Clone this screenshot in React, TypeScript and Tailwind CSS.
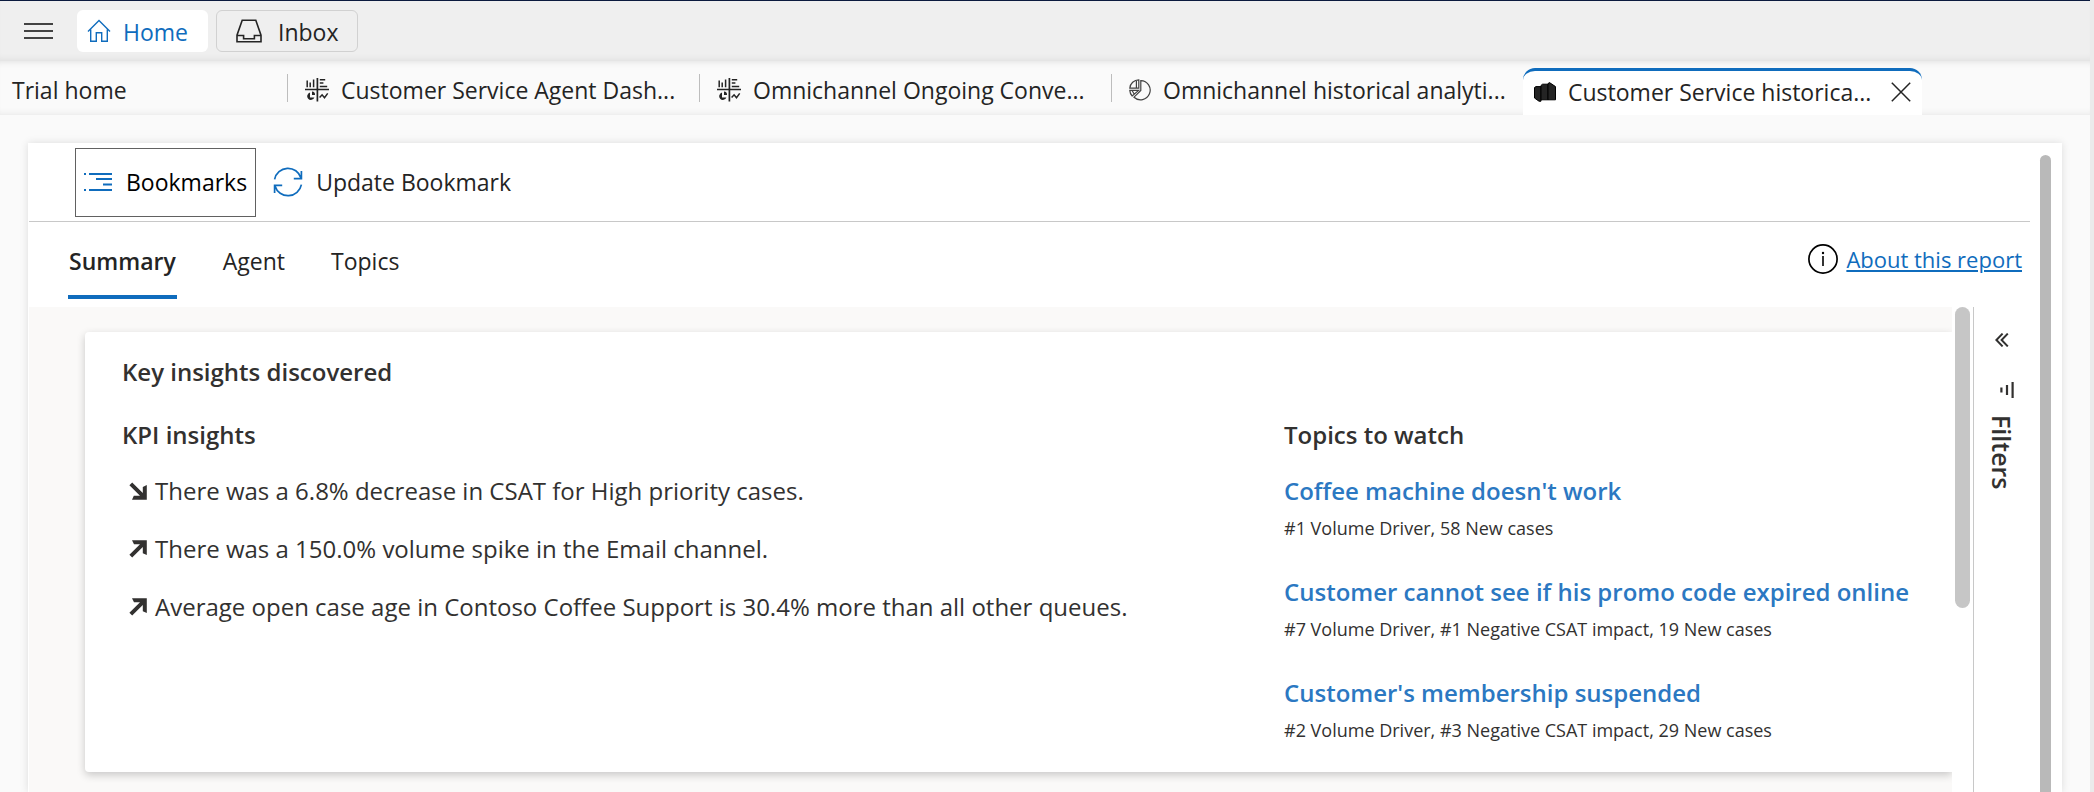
import type { ReactNode } from "react";

type IconProps = { className?: string };

const HomeIcon = () => (
  <svg className="h-6 w-6 shrink-0" viewBox="0 0 24 24" fill="none" stroke="#0f6cbd" strokeWidth="1.4" aria-hidden="true">
    <path d="M1 12.5 12 1.5l11 11M3.7 10.5V22.3h5.6v-8.6h5.4v8.6h5.6V10.5" />
  </svg>
);

const InboxIcon = () => (
  <svg className="h-6 w-[26px] shrink-0" viewBox="0 0 26 24" fill="none" stroke="#242424" strokeWidth="1.6" aria-hidden="true">
    <path d="M6.2 1.2h13.6l5.2 15v6.6H1v-6.6zM1 16.5h6.6v3.2h10.8v-3.2H25" />
  </svg>
);

const DashboardIcon = () => (
  <svg className="h-6 w-6 shrink-0" viewBox="0 0 24 24" fill="none" stroke="#242424" strokeWidth="1.5" aria-hidden="true">
    <path d="M0 11.5h24M12.4 0v23.4" strokeWidth="1.7" />
    <path d="M2.2 2.5v6.8M5.2 4.6v4.7M8.6 1.4v7.9" />
    <path d="M14.8 1.8h5.4M14.8 5h3.6M14.8 8.6h7.4" />
    <path d="M5 14.6a3.7 3.7 0 1 0 4.4 4.8H5z" fill="#242424" stroke="none" />
    <path d="M7 13.6a3.2 3.2 0 0 1 3 3.4H7z" fill="#242424" stroke="none" />
    <path d="m14.6 19.6 2.5-2.8 2.4 3 3.2-4.4" />
  </svg>
);

const PieIcon = () => (
  <svg className="h-[22px] w-[22px] shrink-0" viewBox="0 0 22 22" fill="none" stroke="#424242" strokeWidth="1.2" aria-hidden="true">
    <path d="M11.8 1.6A9.6 9.6 0 1 1 5 18.2l6.8-6.8z" />
    <path d="M9.8.8v8.4H.8A9 9 0 0 1 9.8.8zM7.4 1.6v7.2" />
    <path d="M.8 11.4h8.8L3.2 17A8.6 8.6 0 0 1 .8 11.4zM3.2 11.8l1.8 3" />
  </svg>
);

const BooksIcon = () => (
  <svg className="h-5 w-[22px] shrink-0" viewBox="0 0 22 20" fill="#242424" stroke="#000" strokeWidth="1" aria-hidden="true">
    <path d="M0.5 5.5 2 4.6h5v14.6H5L0.5 16z" />
    <path d="M7 3.4 8.6 2.2H14v15.6H7z" />
    <path d="M14 1.6 15.5.6l6 4v13.2H14z" />
  </svg>
);

const BookmarksIcon = () => (
  <svg className="h-5 w-7 shrink-0" viewBox="0 0 28 20" fill="none" stroke="#0f6cbd" strokeWidth="1.8" aria-hidden="true">
    <path d="M0 2h2M5 2h23M12 7h16M19 12.5h9M0 18h2M5 18h23" />
  </svg>
);

const RefreshIcon = () => (
  <svg className="h-[30px] w-[30px] shrink-0" viewBox="0 0 30 30" fill="none" stroke="#0f6cbd" strokeWidth="1.7" aria-hidden="true">
    <path d="M1.6 12.4A13.6 13.6 0 0 1 28 11M28.4 4v7.6h-7.6" />
    <path d="M28.4 17.6A13.6 13.6 0 0 1 2 19M1.6 26v-7.6h7.6" />
  </svg>
);

const InfoIcon = () => (
  <svg className="h-[30px] w-[30px] shrink-0" viewBox="0 0 30 30" fill="none" stroke="#000" aria-hidden="true">
    <circle cx="15" cy="15" r="14.1" strokeWidth="1.7" />
    <path d="M15 12v10" strokeWidth="1.6" />
    <circle cx="15" cy="9" r="1.2" fill="#000" stroke="none" />
  </svg>
);

const ArrowIcon = ({ className = "" }: IconProps) => (
  <svg className={`h-[18px] w-[18px] shrink-0 ${className}`} viewBox="0 0 18 18" fill="#323130" aria-hidden="true">
    <path d="M3 .2h14.8V15l-4-1.8V7L3.2 17.6.4 14.8 11 4.2H5z" />
  </svg>
);

const CloseIcon = () => (
  <svg className="h-5 w-5" viewBox="0 0 20 20" fill="none" stroke="#242424" strokeWidth="1.5" aria-hidden="true">
    <path d="m.8.8 18.4 18.4M19.2.8.8 19.2" />
  </svg>
);

const ChevronsIcon = () => (
  <svg className="h-[14px] w-[14px]" viewBox="0 0 14 14" fill="none" stroke="#323130" strokeWidth="2" aria-hidden="true">
    <path d="M7.6.6 1.4 7l6.2 6.4M12.8.6 6.6 7l6.2 6.4" />
  </svg>
);

const FilterIcon = () => (
  <svg className="mr-0.5 h-4 w-[14px]" viewBox="0 0 14 16" fill="none" stroke="#323130" strokeWidth="2.2" aria-hidden="true">
    <path d="M1.4 5.5v5M7 3v10M12.6 0v16" />
  </svg>
);

const Tab = ({ icon, label }: { icon: ReactNode; label: string }) => (
  <button
    type="button"
    role="tab"
    aria-selected="false"
    className="relative flex w-[412px] items-center gap-3 pl-[18px] pt-1 before:absolute before:left-0 before:top-[13px] before:h-7 before:w-px before:bg-[#bdbdbd]"
  >
    {icon}
    <span className="whitespace-nowrap">{label}</span>
  </button>
);

const insights = [
  { down: true, text: "There was a 6.8% decrease in CSAT for High priority cases." },
  { down: false, text: "There was a 150.0% volume spike in the Email channel." },
  { down: false, text: "Average open case age in Contoso Coffee Support is 30.4% more than all other queues." },
];

const topics = [
  { title: "Coffee machine doesn't work", detail: "#1 Volume Driver, 58 New cases" },
  { title: "Customer cannot see if his promo code expired online", detail: "#7 Volume Driver, #1 Negative CSAT impact, 19 New cases" },
  { title: "Customer's membership suspended", detail: "#2 Volume Driver, #3 Negative CSAT impact, 29 New cases" },
];

export default function App() {
  return (
    <div className="flex h-screen flex-col overflow-hidden border-r-4 border-[#ebebeb] bg-[#fafafa] font-['Open_Sans',sans-serif] text-[23px] leading-9 text-[#242424]">
      <header className="flex h-[61px] shrink-0 items-center border-t border-[#0b1a3e] bg-[#efefef] pl-6 shadow-[inset_0_-6px_6px_-4px_rgba(0,0,0,0.06)]">
        <button type="button" aria-label="Open navigation" className="mr-6 flex h-4 w-[29px] flex-col justify-between">
          <span className="h-0.5 w-full bg-[#424242]" />
          <span className="h-0.5 w-full bg-[#424242]" />
          <span className="h-0.5 w-full bg-[#424242]" />
        </button>
        <button type="button" className="mr-2 flex h-[42px] items-center gap-3 rounded-md bg-white pl-[10px] pr-5 text-[#0f6cbd]">
          <HomeIcon />
          <span className="pt-0.5">Home</span>
        </button>
        <button type="button" className="flex h-[42px] items-center gap-4 rounded-md border border-[#d1d1d1] pl-[19px] pr-[18px]">
          <InboxIcon />
          <span className="pt-0.5">Inbox</span>
        </button>
      </header>

      <div role="tablist" className="flex h-[54px] shrink-0 border-b border-[#efefef] shadow-[inset_0_6px_6px_-5px_rgba(0,0,0,0.1),inset_0_-6px_6px_-5px_rgba(0,0,0,0.06)]">
        <button type="button" role="tab" aria-selected="false" className="flex w-[287px] items-center pl-3 pt-1">
          Trial home
        </button>
        <Tab icon={<DashboardIcon />} label="Customer Service Agent Dash..." />
        <Tab icon={<DashboardIcon />} label="Omnichannel Ongoing Conve..." />
        <Tab icon={<PieIcon />} label="Omnichannel historical analyti..." />
        <div className="-mb-px mt-[7px] flex w-[399px] items-center rounded-t-xl border-t-[3px] border-[#0f6cbd] bg-white px-[11px] pb-0.5">
          <button type="button" role="tab" aria-selected="true" className="flex items-center gap-3">
            <BooksIcon />
            <span className="whitespace-nowrap">Customer Service historica...</span>
          </button>
          <button type="button" aria-label="Close tab" className="ml-auto">
            <CloseIcon />
          </button>
        </div>
      </div>

      <main className="ml-7 mr-7 mt-7 flex min-h-0 flex-1 bg-white pl-px shadow-[0_0_8px_rgba(0,0,0,0.12)]">
        <div className="flex min-w-0 flex-1 flex-col">
          <div className="flex h-[79px] shrink-0 items-center border-b border-[#c8c8c8] pl-[46px]">
            <button type="button" className="flex h-[69px] items-center gap-[14px] border border-[#616161] px-2 text-black">
              <BookmarksIcon />
              <span>Bookmarks</span>
            </button>
            <button type="button" className="ml-[17px] flex h-[69px] items-center gap-[13px]">
              <RefreshIcon />
              <span>Update Bookmark</span>
            </button>
          </div>

          <div className="flex h-[85px] shrink-0 items-start justify-between pl-[39px] pr-2">
            <nav className="flex gap-[46px] pt-[21px]">
              <a href="#summary" aria-current="page" className="h-[56px] border-b-4 border-[#0f6cbd] px-px font-semibold">
                Summary
              </a>
              <a href="#agent">Agent</a>
              <a href="#topics">Topics</a>
            </nav>
            <a href="#about" className="flex items-center gap-2 pt-[19px] text-[22px] text-[#0f6cbd]">
              <InfoIcon />
              <span className="underline decoration-2 underline-offset-2">About this report</span>
            </a>
          </div>

          <div className="flex min-h-0 flex-1">
            <div className="min-w-0 flex-1 overflow-hidden bg-[#faf9f8] pl-14 pt-[25px]">
              <section className="rounded-l bg-white pb-7 pl-[37px] pt-[22px] text-[24px] text-[#323130] shadow-[0_3px_8px_rgba(0,0,0,0.2)]">
                <h2 className="font-semibold">Key insights discovered</h2>
                <div className="mt-[27px] grid grid-cols-[1162fr_668fr]">
                  <div>
                    <h3 className="font-semibold">KPI insights</h3>
                    <ul className="mt-5 flex flex-col gap-[22px] pl-[7px]">
                      {insights.map((item) => (
                        <li key={item.text} className="flex items-center gap-2 whitespace-nowrap">
                          <ArrowIcon className={item.down ? "rotate-90" : ""} />
                          <span>{item.text}</span>
                        </li>
                      ))}
                    </ul>
                  </div>
                  <div>
                    <h3 className="font-semibold">Topics to watch</h3>
                    <ul className="mt-5 flex flex-col gap-8">
                      {topics.map((topic) => (
                        <li key={topic.title} className="whitespace-nowrap">
                          <a href="#topic" className="block font-semibold text-[#2b78c2]">
                            {topic.title}
                          </a>
                          <p className="mt-[6px] text-[18px] leading-[27px]">{topic.detail}</p>
                        </li>
                      ))}
                    </ul>
                  </div>
                </div>
              </section>
            </div>
            <div className="flex w-[78px] shrink-0">
              <div className="ml-[3px] h-[301px] w-[15px] rounded-full bg-[#c6c6c6]" />
              <aside className="ml-[3px] flex flex-1 flex-col items-center border-l border-[#c8c8c8] pt-[26px]">
                <button type="button" aria-label="Expand filters">
                  <ChevronsIcon />
                </button>
                <div className="mt-[35px] flex flex-col items-end gap-[17px]">
                  <FilterIcon />
                  <span className="text-[25px] leading-7 font-semibold text-[#323130] [writing-mode:vertical-rl]">Filters</span>
                </div>
              </aside>
            </div>
          </div>
        </div>
        <div className="ml-[10px] mr-[11px] mt-3 w-[11px] shrink-0 rounded-t-full bg-[#b9b9b9]" />
      </main>
    </div>
  );
}
